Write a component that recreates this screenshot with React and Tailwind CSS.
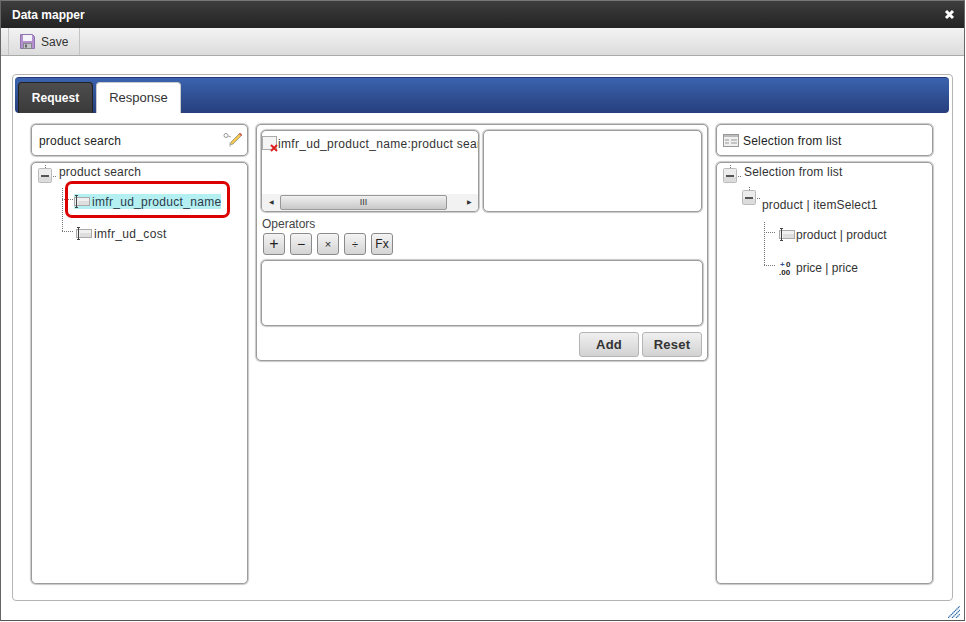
import React from 'react';

const panel = 'rounded-[5px] border border-[#9c9c9c] bg-white shadow-[0_0_1px_1px_#c8c8c8]';

function MinusBox() {
  return (
    <svg width="18" height="19" viewBox="0 0 18 19" className="shrink-0">
      <path d="M7.5 0v3M15 11.5h3" stroke="#777" strokeDasharray="1 1" fill="none" />
      <rect x="0.5" y="3.5" width="13" height="14" rx="1" fill="#ececec" stroke="#bbb" />
      <rect x="1" y="12" width="12" height="5" fill="#dcdcdc" />
      <rect x="3" y="10" width="8" height="2" fill="#555" />
    </svg>
  );
}

function FieldIcon() {
  return (
    <svg width="16" height="13" viewBox="0 0 16 13" className="shrink-0">
      <rect x="0.5" y="2.5" width="15" height="8" fill="#f0f0f0" stroke="#aaa" />
      <rect x="4" y="6" width="11" height="4" fill="#dedede" />
      <path d="M1 0.5h3M2.5 0.5v12M1 12.5h3" stroke="#444" fill="none" />
    </svg>
  );
}

function NumberIcon() {
  return (
    <svg width="15" height="16" viewBox="0 0 15 16" className="shrink-0">
      <text x="1" y="7" fontSize="8" fontWeight="700" fill="#33509a" fontFamily="Liberation Sans">+</text>
      <text x="7" y="7" fontSize="8" fontWeight="700" fill="#222" fontFamily="Liberation Sans">0</text>
      <text x="0" y="15" fontSize="8" fontWeight="700" fill="#222" fontFamily="Liberation Sans">.00</text>
    </svg>
  );
}

function Connector({ height, stubs }) {
  return (
    <svg width="12" height={height} viewBox={`0 0 12 ${height}`} className="shrink-0">
      <path
        d={`M0.5 0V${stubs[stubs.length - 1]}` + stubs.map((y) => `M0 ${y + 0.5}H12`).join('')}
        stroke="#777"
        strokeDasharray="1 1"
        fill="none"
      />
    </svg>
  );
}

function OpButton({ label, size }) {
  return (
    <button className={`flex h-[22px] w-[22px] items-center justify-center rounded-[3px] border border-[#8a8a8a] bg-linear-to-b from-[#f4f4f4] to-[#d4d4d4] text-[#222] ${size}`}>
      {label}
    </button>
  );
}

function ActionButton({ label }) {
  return (
    <button className="flex h-[25px] w-[60px] items-center justify-center rounded-[3px] border border-[#b4b4b4] bg-linear-to-b from-[#f0f0f0] to-[#d2d2d2] text-[13px] leading-none font-bold tracking-[0.2px] text-[#333]">
      {label}
    </button>
  );
}

export default function App() {
  return (
    <div className="flex h-[621px] w-[965px] flex-col border border-t-[#777] border-r-[#666] border-b-[#555] border-l-[#666] bg-white font-['Liberation_Sans',Arial,sans-serif] text-[12px] text-[#333]">
      {/* title bar */}
      <div className="flex h-[27px] shrink-0 items-center justify-between bg-linear-to-b from-[#3e3e3e] to-[#232323] pr-[9px] pl-[11px]">
        <span className="text-[12px] font-bold text-white">Data mapper</span>
        <svg width="11" height="11" viewBox="0 0 11 11">
          <path d="M2 2l7 7M9 2l-7 7" stroke="#fff" strokeWidth="3" />
        </svg>
      </div>

      {/* toolbar */}
      <div className="flex h-[28px] shrink-0 border-b border-[#aaa] bg-linear-to-b from-[#f3f3f3] to-[#dcdcdc] pl-[7px]">
        <button className="flex h-full w-[72px] items-center gap-[6px] border-x border-[#c4c4c4] pl-[11px] text-[12px] text-[#333]">
          <svg width="15" height="15" viewBox="0 0 15 15" className="shrink-0">
            <path d="M0.5 0.5h12l2 2v12h-14z" fill="#b48fd0" stroke="#8d74ad" />
            <rect x="3" y="1" width="9" height="6" fill="#f4f4f8" />
            <rect x="3.5" y="9.5" width="8" height="5" fill="#c4c4cc" stroke="#888" />
            <rect x="5" y="10.5" width="2" height="3" fill="#666" />
          </svg>
          Save
        </button>
      </div>

      {/* main */}
      <div className="flex-1 pt-[18px] pl-[11px]">
        <div className="flex h-[527px] w-[941px] flex-col rounded-[4px] border border-[#b4b4b4] p-[2px]">
          <div className="flex h-[36px] w-[934px] shrink-0 items-end gap-[3px] rounded-[4px] border-t border-[#23397a] bg-linear-to-b from-[#3b63ae] to-[#273f7d] pl-[3px]">
            <div className="flex h-[31px] w-[75px] items-center justify-center rounded-t-[4px] border border-b-0 border-[#222] bg-linear-to-b from-[#4d4d4d] to-[#3a3a3a] text-[12px] font-bold text-white">
              Request
            </div>
            <div className="flex h-[31px] w-[85px] items-center justify-center rounded-t-[4px] border border-b-0 border-[#ccc] bg-white text-[13px] text-[#333]">
              Response
            </div>
          </div>

          <div className="flex gap-[8px] pt-[11px] pl-[16px]">
            {/* left column */}
            <div className="flex w-[217px] flex-col gap-[6px]">
              <div className={`${panel} flex h-[32px] items-center justify-between pr-[4px] pl-[7px] text-[#222]`}>
                <span className="mt-[1px] tracking-[0.2px]">product search</span>
                <svg width="20" height="17" viewBox="0 0 20 17">
                  <circle cx="3" cy="3.5" r="2" fill="none" stroke="#999" />
                  <path d="M5 4l3 1" stroke="#aaa" />
                  <path d="M17 1l2 2-9 9-3 1 1-3z" fill="#f2c94c" stroke="#777" strokeWidth="0.6" />
                  <path d="M16 2l2 2 1-1-2-2z" fill="#e05050" />
                  <path d="M7 10v5" stroke="#bbb" />
                </svg>
              </div>
              <div className={`${panel} h-[422px] pt-[2px] pl-[6px]`}>
                <div className="flex items-center gap-[3px]">
                  <MinusBox />
                  <span className="-mt-[5px] tracking-[0.2px]">product search</span>
                </div>
                <div className="mt-[4px] ml-[24px] flex">
                  <Connector height={44} stubs={[11, 43]} />
                  <div className="flex flex-col pt-[6px]">
                    <div className="relative flex h-[15px] items-center">
                      <div className="flex h-[15px] items-center bg-[#b4f0f2]">
                        <FieldIcon />
                        <span className="pl-[2px] tracking-[0.3px] text-[#2c3a4a]">imfr_ud_product_name</span>
                      </div>
                      <div className="absolute -top-[13px] -left-[9px] h-[37px] w-[165px] rounded-[7px] border-[3px] border-[#dc0000]"></div>
                    </div>
                    <div className="mt-[17px] ml-[2px] flex h-[15px] items-center">
                      <FieldIcon />
                      <span className="ml-[2px] tracking-[0.33px]">imfr_ud_cost</span>
                    </div>
                  </div>
                </div>
              </div>
            </div>

            {/* middle column */}
            <div className={`${panel} flex h-[237px] w-[452px] flex-col pt-[5px] pl-[4px]`}>
              <div className="flex gap-[4px]">
                <div className={`${panel} flex h-[82px] w-[218px] flex-col overflow-hidden`}>
                  <div className="flex flex-1 overflow-hidden pt-[4px] whitespace-nowrap">
                    <svg width="16" height="16" viewBox="0 0 16 16" className="mt-[1px] shrink-0">
                      <rect x="0.5" y="0.5" width="14" height="13" fill="#f4f4f4" stroke="#aaa" />
                      <path d="M9 9l6 6M15 9l-6 6" stroke="#e02020" strokeWidth="2" />
                    </svg>
                    <span className="tracking-[0.3px]">imfr_ud_product_name:product search</span>
                  </div>
                  <div className="flex h-[17px] items-center bg-[#f2f2f2] text-[#333]">
                    <span className="flex w-[18px] justify-center text-[6px]">◀</span>
                    <div className="flex h-[15px] w-[167px] items-center justify-center rounded-[2px] border border-[#999] bg-linear-to-b from-[#f0f0f0] to-[#c8c8c8] text-[9px] leading-none">
                      III
                    </div>
                    <span className="ml-auto flex w-[18px] justify-center text-[6px]">▶</span>
                  </div>
                </div>
                <div className={`${panel} h-[82px] w-[219px]`}></div>
              </div>
              <div className="mt-[5px] pl-[1px] leading-[14px] text-[#444]">Operators</div>
              <div className="mt-[2px] flex gap-[5px] pl-[2px]">
                <OpButton label="+" size="text-[16px] font-light" />
                <OpButton label="−" size="text-[14px]" />
                <OpButton label="×" size="text-[11px]" />
                <OpButton label="÷" size="text-[11px]" />
                <OpButton label="Fx" size="text-[12px]" />
              </div>
              <div className={`${panel} mt-[5px] h-[66px] w-[442px]`}></div>
              <div className="mt-[6px] flex justify-end gap-[3px] pr-[5px]">
                <ActionButton label="Add" />
                <ActionButton label="Reset" />
              </div>
            </div>

            {/* right column */}
            <div className="flex w-[217px] flex-col gap-[6px]">
              <div className={`${panel} flex h-[32px] items-center gap-[4px] pl-[6px] text-[#222]`}>
                <svg width="16" height="13" viewBox="0 0 16 13" className="shrink-0">
                  <rect x="0.5" y="0.5" width="15" height="12" fill="#f0f0f0" stroke="#999" />
                  <rect x="1" y="1" width="14" height="2" fill="#bbb" />
                  <path d="M2 6h4M2 9h4M8 6h6M8 9h6" stroke="#999" />
                </svg>
                <span className="mt-[1px] tracking-[0.2px]">Selection from list</span>
              </div>
              <div className={`${panel} h-[422px] pt-[2px] pl-[6px]`}>
                <div className="flex items-center gap-[3px]">
                  <MinusBox />
                  <span className="-mt-[5px] tracking-[0.2px]">Selection from list</span>
                </div>
                <div className="mt-[3px] ml-[19px] flex">
                  <MinusBox />
                  <span className="mt-[9px] ml-[2px] tracking-[0.15px]">product | itemSelect1</span>
                </div>
                <div className="mt-[8px] ml-[41px] flex">
                  <Connector height={44} stubs={[10, 43]} />
                  <div className="flex flex-col pt-[2px]">
                    <div className="ml-[3px] flex h-[15px] items-center pt-[6px]">
                      <FieldIcon />
                      <span className="ml-[1px] tracking-[0.05px]">product | product</span>
                    </div>
                    <div className="mt-[19px] ml-[3px] flex h-[16px] items-center pt-[4px]">
                      <NumberIcon />
                      <span className="ml-[2px]">price | price</span>
                    </div>
                  </div>
                </div>
              </div>
            </div>
          </div>
        </div>

        {/* resize grip */}
        <div className="flex justify-end pt-[5px] pr-[4px]">
          <svg width="12" height="12" viewBox="0 0 12 12">
            <path d="M0 12L12 0M4 12l8-8M8 12l4-4" stroke="#2f6aa8" strokeWidth="1.2" strokeDasharray="1.5 0.5" />
          </svg>
        </div>
      </div>
    </div>
  );
}
